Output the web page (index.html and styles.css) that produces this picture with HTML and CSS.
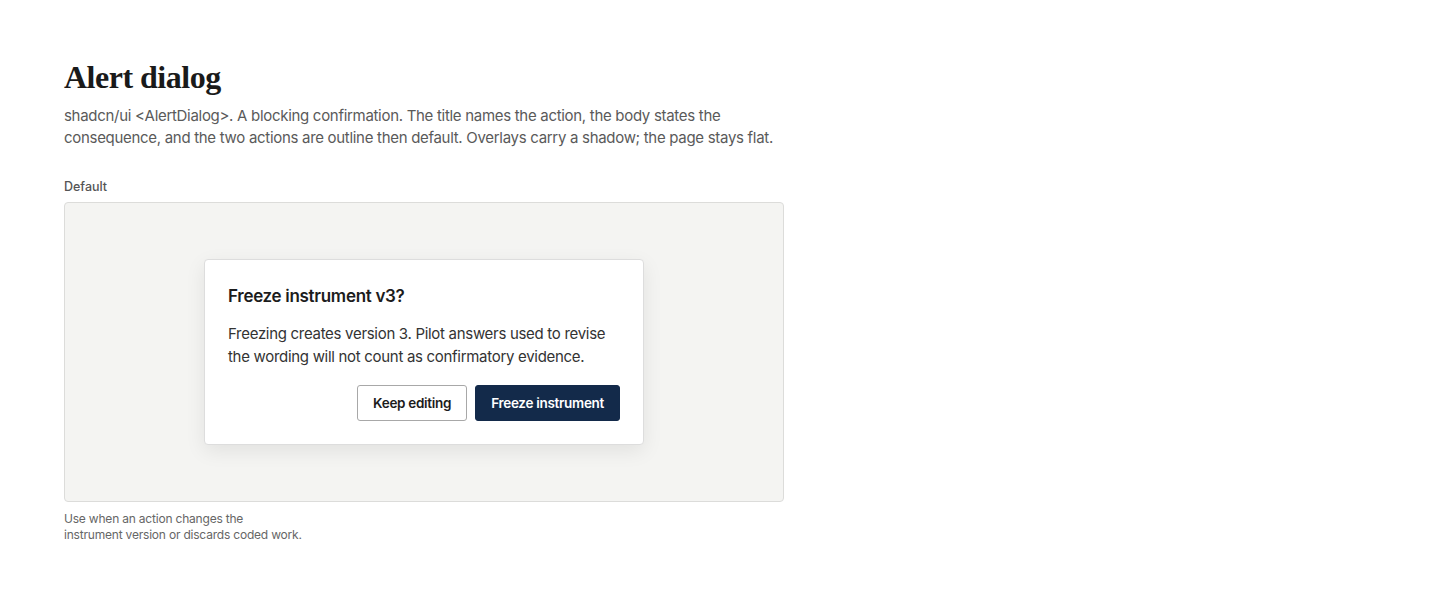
FILE: index.html
```html
<!DOCTYPE html>
<html lang="en">
<head>
    <meta charset="UTF-8">
    <meta name="viewport" content="width=device-width, initial-scale=1.0">
    <title>Alert dialog</title>
    <link rel="stylesheet" href="styles.css">
</head>
<body>
    <main class="page">
        <h1 class="page-title">Alert dialog</h1>
        <p class="page-lead">shadcn/ui &lt;AlertDialog&gt;. A blocking confirmation. The title names the action, the body states the consequence, and the two actions are outline then default. Overlays carry a shadow; the page stays flat.</p>

        <section class="example">
            <div class="example-label">Default</div>
            <div class="example-stage">
                <div class="dialog" role="alertdialog">
                    <h2 class="dialog-title">Freeze instrument v3?</h2>
                    <p class="dialog-body">Freezing creates version 3. Pilot answers used to revise the wording will not count as confirmatory evidence.</p>
                    <div class="dialog-actions">
                        <button class="btn btn-outline">Keep editing</button>
                        <button class="btn btn-default">Freeze instrument</button>
                    </div>
                </div>
            </div>
            <p class="example-note">Use when an action changes the instrument version or discards coded work.</p>
        </section>
    </main>
</body>
</html>
```

FILE: styles.css
```css
* {
    margin: 0;
    padding: 0;
    box-sizing: border-box;
}

body {
    background: #ffffff;
    color: #1c1c1c;
    font-family: Inter, 'Noto Sans', sans-serif;
    letter-spacing: -0.3px;
}

.page {
    width: 720px;
    margin-left: 64px;
    padding-top: 57px;
}

.page-title {
    font-family: 'Liberation Serif', 'DejaVu Serif', serif;
    font-size: 32px;
    font-weight: 700;
    line-height: 40px;
    color: #1a1a1a;
    letter-spacing: -0.5px;
}

.page-lead {
    margin-top: 8px;
    font-size: 15px;
    line-height: 22px;
    color: #5a5a5a;
}

.example {
    margin-top: 30px;
}

.example-label {
    font-size: 12.5px;
    font-weight: 500;
    line-height: 16px;
    letter-spacing: 0;
    color: #555555;
}

.example-stage {
    margin-top: 7px;
    height: 300px;
    display: flex;
    justify-content: center;
    align-items: center;
    background: #f4f4f2;
    border: 1px solid #dcdcda;
    border-radius: 4px;
}

.dialog {
    width: 440px;
    padding: 24px 23px 23px 23px;
    background: #ffffff;
    border: 1px solid #dddddd;
    border-radius: 4px;
    box-shadow: 0 6px 20px rgba(0, 0, 0, 0.08);
}

.dialog-title {
    font-size: 17px;
    font-weight: 600;
    line-height: 24px;
    color: #1c1c1c;
}

.dialog-body {
    margin-top: 14px;
    font-size: 15px;
    line-height: 23px;
    color: #333333;
}

.dialog-actions {
    margin-top: 17px;
    display: flex;
    justify-content: flex-end;
    gap: 8px;
}

.btn {
    height: 36px;
    padding: 0 15px;
    border-radius: 3px;
    font-family: inherit;
    font-size: 13.5px;
    font-weight: 600;
    letter-spacing: -0.3px;
    cursor: pointer;
}

.btn-outline {
    background: #ffffff;
    border: 1px solid #a8a8a8;
    color: #1c1c1c;
}

.btn-default {
    background: #132a4a;
    border: 1px solid #132a4a;
    color: #ffffff;
}

.example-note {
    margin-top: 9px;
    max-width: 238px;
    font-size: 12px;
    line-height: 16px;
    letter-spacing: -0.2px;
    color: #666666;
}
```
